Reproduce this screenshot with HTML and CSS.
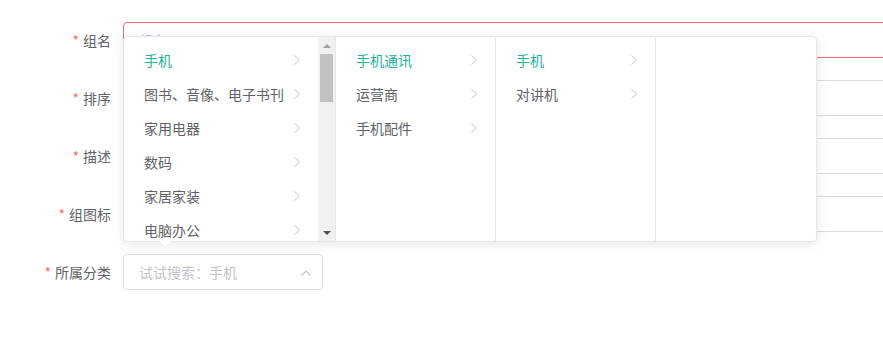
FILE: index.html
```
<!DOCTYPE html>
<html lang="zh-CN">
<head>
  <meta charset="UTF-8">
  <meta name="viewport" content="width=device-width, initial-scale=1.0">
  <title>分组编辑</title>
  <link rel="stylesheet" href="styles.css">
</head>
<body>
  <form class="group-form">
    <div class="form-item">
      <label class="form-label required">组名</label>
      <div class="form-control">
        <input class="text-input is-error" type="text" placeholder="组名">
      </div>
    </div>
    <div class="form-item">
      <label class="form-label required">排序</label>
      <div class="form-control">
        <input class="text-input" type="text">
      </div>
    </div>
    <div class="form-item">
      <label class="form-label required">描述</label>
      <div class="form-control">
        <input class="text-input" type="text">
      </div>
    </div>
    <div class="form-item">
      <label class="form-label required">组图标</label>
      <div class="form-control">
        <input class="text-input" type="text">
      </div>
    </div>
    <div class="form-item">
      <label class="form-label required">所属分类</label>
      <div class="form-control">
        <div class="cascader">
          <input class="cascader-input" type="text" placeholder="试试搜索：手机">
          <svg class="cascader-caret" width="10" height="6" viewBox="0 0 10 6">
            <path d="M0.5 5.5 L5 1 L9.5 5.5" fill="none" stroke="#c0c4cc" stroke-width="1.2"/>
          </svg>

          <!-- dropdown panel (opened above the input) -->
          <div class="cascader-panel">
            <div class="cascader-menu menu-first">
              <ul class="menu-list">
                <li class="node active">手机<svg class="node-arrow" width="6" height="10" viewBox="0 0 6 10"><path d="M0.5 0.5 L5.5 5 L0.5 9.5"/></svg></li>
                <li class="node">图书、音像、电子书刊<svg class="node-arrow" width="6" height="10" viewBox="0 0 6 10"><path d="M0.5 0.5 L5.5 5 L0.5 9.5"/></svg></li>
                <li class="node">家用电器<svg class="node-arrow" width="6" height="10" viewBox="0 0 6 10"><path d="M0.5 0.5 L5.5 5 L0.5 9.5"/></svg></li>
                <li class="node">数码<svg class="node-arrow" width="6" height="10" viewBox="0 0 6 10"><path d="M0.5 0.5 L5.5 5 L0.5 9.5"/></svg></li>
                <li class="node">家居家装<svg class="node-arrow" width="6" height="10" viewBox="0 0 6 10"><path d="M0.5 0.5 L5.5 5 L0.5 9.5"/></svg></li>
                <li class="node">电脑办公<svg class="node-arrow" width="6" height="10" viewBox="0 0 6 10"><path d="M0.5 0.5 L5.5 5 L0.5 9.5"/></svg></li>
              </ul>
              <div class="scrollbar">
                <div class="sb-btn"><span class="sb-up"></span></div>
                <div class="sb-track"><div class="sb-thumb"></div></div>
                <div class="sb-btn"><span class="sb-down"></span></div>
              </div>
            </div>
            <div class="cascader-menu">
              <ul class="menu-list">
                <li class="node active">手机通讯<svg class="node-arrow" width="6" height="10" viewBox="0 0 6 10"><path d="M0.5 0.5 L5.5 5 L0.5 9.5"/></svg></li>
                <li class="node">运营商<svg class="node-arrow" width="6" height="10" viewBox="0 0 6 10"><path d="M0.5 0.5 L5.5 5 L0.5 9.5"/></svg></li>
                <li class="node">手机配件<svg class="node-arrow" width="6" height="10" viewBox="0 0 6 10"><path d="M0.5 0.5 L5.5 5 L0.5 9.5"/></svg></li>
              </ul>
            </div>
            <div class="cascader-menu">
              <ul class="menu-list">
                <li class="node active">手机<svg class="node-arrow" width="6" height="10" viewBox="0 0 6 10"><path d="M0.5 0.5 L5.5 5 L0.5 9.5"/></svg></li>
                <li class="node">对讲机<svg class="node-arrow" width="6" height="10" viewBox="0 0 6 10"><path d="M0.5 0.5 L5.5 5 L0.5 9.5"/></svg></li>
              </ul>
            </div>
            <div class="cascader-menu menu-last">
              <ul class="menu-list"></ul>
            </div>
            <span class="popper-arrow"></span>
          </div>
        </div>
      </div>
    </div>
  </form>
</body>
</html>
```
FILE: styles.css
```
/* General Styles */
body {
  margin: 0;
  font-family: "Noto Sans CJK SC", "Noto Sans", sans-serif;
  font-size: 14px;
  color: #606266;
  background: #fff;
  overflow: hidden;
}

ul {
  list-style: none;
  margin: 0;
  padding: 0;
}

.group-form {
  padding-top: 22px;
}

.form-item {
  display: flex;
  margin-bottom: 22px;
}

.form-label {
  width: 123px;
  flex-shrink: 0;
  box-sizing: border-box;
  padding-right: 12px;
  text-align: right;
  line-height: 36px;
  color: #606266;
}

.form-label.required::before {
  content: "*";
  color: #f56c6c;
  margin-right: 4px;
}

.form-control {
  flex: 1;
}

.text-input,
.cascader-input {
  display: block;
  box-sizing: border-box;
  height: 36px;
  padding: 0 15px;
  border: 1px solid #dcdfe6;
  border-radius: 4px;
  font-family: inherit;
  font-size: 14px;
  color: #606266;
  outline: none;
  background: #fff;
}

.text-input {
  width: 800px;
}

.text-input.is-error {
  border-color: #f56c6c;
}

.text-input::placeholder,
.cascader-input::placeholder {
  color: #c0c4cc;
}

/* Cascader */
.cascader {
  position: relative;
  width: 200px;
}

.cascader-input {
  width: 200px;
  padding-right: 30px;
}

.cascader-caret {
  position: absolute;
  right: 12px;
  top: 16px;
}

.cascader-panel {
  position: absolute;
  left: 0;
  bottom: calc(100% + 12px);
  display: flex;
  box-sizing: border-box;
  width: 694px;
  height: 206px;
  background: #fff;
  border: 1px solid #e4e7ed;
  border-radius: 4px;
  box-shadow: 0 2px 12px rgba(0, 0, 0, 0.1);
}

.cascader-menu {
  width: 160px;
  height: 204px;
  box-sizing: border-box;
  border-right: 1px solid #e4e7ed;
  overflow: hidden;
}

.cascader-menu.menu-first {
  display: flex;
  width: 212px;
}

.cascader-menu.menu-last {
  border-right: none;
}

.menu-list {
  padding: 6px 0;
}

.menu-first .menu-list {
  width: 194px;
  flex-shrink: 0;
}

.node {
  display: flex;
  align-items: center;
  justify-content: space-between;
  height: 34px;
  padding: 0 18px 0 20px;
  line-height: 34px;
  white-space: nowrap;
  color: #606266;
}

.node.active {
  color: #1ab394;
}

.node-arrow {
  flex-shrink: 0;
  margin-left: 4px;
}

.node-arrow path {
  fill: none;
  stroke: #c0c4cc;
  stroke-width: 1;
}

/* fake native scrollbar of the first menu */
.scrollbar {
  display: flex;
  flex-direction: column;
  width: 17px;
  height: 204px;
  background: #f1f1f1;
}

.sb-btn {
  height: 17px;
  display: flex;
  align-items: center;
  justify-content: center;
}

.sb-up {
  width: 0;
  height: 0;
  border-left: 4px solid transparent;
  border-right: 4px solid transparent;
  border-bottom: 4px solid #a3a3a3;
}

.sb-down {
  width: 0;
  height: 0;
  border-left: 4px solid transparent;
  border-right: 4px solid transparent;
  border-top: 4px solid #505050;
}

.sb-track {
  flex: 1;
  padding: 0 2px;
}

.sb-thumb {
  height: 48px;
  background: #c1c1c1;
}

.popper-arrow {
  position: absolute;
  left: 35px;
  bottom: -7px;
  width: 0;
  height: 0;
  border-left: 6px solid transparent;
  border-right: 6px solid transparent;
  border-top: 6px solid #ebeef5;
}

.popper-arrow::after {
  content: "";
  position: absolute;
  left: -6px;
  top: -7px;
  width: 0;
  height: 0;
  border-left: 6px solid transparent;
  border-right: 6px solid transparent;
  border-top: 6px solid #fff;
}
```
